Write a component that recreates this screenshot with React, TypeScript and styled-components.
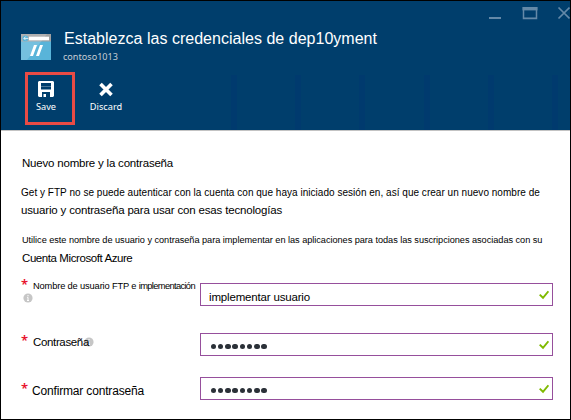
import React from 'react';
import styled, { createGlobalStyle } from 'styled-components';

const GlobalStyle = createGlobalStyle`
  * { box-sizing: border-box; }
  body { margin: 0; background: #fff; overflow: hidden; }
`;

const Blade = styled.main`
  width: 571px;
  height: 420px;
  border: 1px solid #000;
  background: #fff;
  color: #000;
  font-family: "Liberation Sans", Arial, sans-serif;
  overflow: hidden;
`;

const Header = styled.header`
  display: flex;
  flex-direction: column;
  height: 130px;
  border-bottom: 1px solid #c3c3c3;
  background: #003e6c;
  color: #fff;
`;

const WindowControls = styled.div`
  display: flex;
  justify-content: flex-end;
  height: 26px;
  padding-top: 5px;
`;

const TitleBar = styled.div`
  display: flex;
  height: 45px;
  padding: 7px 0 0 20px;
`;

const Titles = styled.div`
  display: flex;
  flex-direction: column;
  margin: -5px 0 0 12px;
`;

const Title = styled.h1`
  margin: 0 0 0 1px;
  font-size: 16px;
  font-weight: 400;
  line-height: 20px;
  letter-spacing: 0.02px;
  white-space: nowrap;
`;

const Subtitle = styled.span`
  margin-top: 2px;
  color: #c6cdd4;
  font: 9.1px/12px "Noto Sans", sans-serif;
`;

const Toolbar = styled.nav`
  display: flex;
  height: 58px;
  padding-left: 24px;
  background: repeating-linear-gradient(
    90deg, #003a6e 0 6px, transparent 6px 64.2px
  ) 230px 3px / 327px 55px no-repeat;
`;

const Command = styled.button<{ $highlighted?: boolean }>`
  display: flex;
  flex-direction: column;
  align-items: center;
  width: 50px;
  height: 53px;
  margin-right: 6px;
  padding: ${p => (p.$highlighted ? '6px 8px 0 0' : '9px 0 0')};
  border: ${p => (p.$highlighted ? '3px solid #e94b45' : '0')};
  background: transparent;
  color: #fff;
  font: 9.2px/12px "Noto Sans", sans-serif;
  svg { display: block; margin-bottom: 4px; flex: none; }
`;

const Content = styled.section`
  padding: 24px 0 0 20px;
`;

const Line = styled.p<{ $size: number; $height: number; $tracking: number; $indent?: number; $gap?: number }>`
  margin: 0 0 ${p => p.$gap ?? 0}px ${p => p.$indent ?? 0}px;
  font-size: ${p => p.$size}px;
  line-height: ${p => p.$height}px;
  letter-spacing: ${p => p.$tracking}px;
  white-space: nowrap;
`;

const Field = styled.div<{ $gap: number }>`
  display: grid;
  grid-template-columns: 12px 167px 353px;
  height: 23px;
  margin-bottom: ${p => p.$gap}px;
`;

const Required = styled.span<{ $top: number }>`
  margin-top: ${p => p.$top}px;
  color: #e8112d;
  font: 600 13px/16px "Noto Sans", sans-serif;
`;

const Label = styled.label<{ $size: number; $tracking: number; $top: number; $shift?: number }>`
  display: flex;
  align-items: center;
  isolation: isolate;
  height: 16px;
  margin: ${p => p.$top}px 0 0 ${p => p.$shift ?? 0}px;
  font-size: ${p => p.$size}px;
  line-height: 16px;
  letter-spacing: ${p => p.$tracking}px;
  white-space: pre;
`;

const LabelStack = styled.div`
  display: flex;
  flex-direction: column;
  align-items: flex-start;
`;

const Condensed = styled.span`
  letter-spacing: -0.64px;
`;

const InfoDot = styled.svg<{ $below?: boolean }>`
  display: block;
  flex: none;
  position: relative;
  z-index: -1;
  width: 10px;
  height: 10px;
  margin: ${p => (p.$below ? '0 0 0 -10px' : '0 0 0 -5px')};
`;

const InfoRow = styled.div`
  isolation: isolate;
  margin-top: -1px;
`;

const InputBox = styled.div`
  display: flex;
  align-items: center;
  justify-content: space-between;
  height: 23px;
  padding: 0 3px 0 8px;
  border: 1px solid #964f9c;
  font-size: 11.5px;
  letter-spacing: -0.17px;
  line-height: 14px;
`;

const Value = styled.span`
  padding-top: 4px;
`;

const Dots = styled.span`
  display: flex;
  gap: 1.75px;
  padding: 4px 0 0 1.5px;
`;

const Dot = styled.i`
  width: 5.5px;
  height: 5.5px;
  border-radius: 50%;
  background: #2b3138;
`;

const Info = ({ below }: { below?: boolean }) => (
  <InfoDot $below={below} viewBox="0 0 10 10">
    <circle cx="5" cy="5" r="4.6" fill="#c6c6c6" />
    <path d="M5 2v1.3M4.2 4.4H5V7.4M4 7.5h2" stroke="#fff" strokeWidth="1" fill="none" />
  </InfoDot>
);

const Check = () => (
  <svg width="10" height="10" viewBox="0 0 10 10">
    <path d="M.7 4.6 4 7.8 9.4 1.3" fill="none" stroke="#7fba00" strokeWidth="1.9" />
  </svg>
);

const Password = () => (
  <InputBox>
    <Dots>{Array.from({ length: 8 }, (_, i) => <Dot key={i} />)}</Dots>
    <Check />
  </InputBox>
);

export default function App() {
  return (
    <>
      <GlobalStyle />
      <Blade>
        <Header>
          <WindowControls>
            <svg width="82" height="14" viewBox="0 0 82 14" fill="none" stroke="#6489a8">
              <path d="M1 12h12" strokeWidth="2" />
              <path d="M35.5 1v11.5h13V1" strokeWidth="1.5" />
              <path d="M34.5 2.7h15" strokeWidth="3.4" />
              <path d="M35 12.3h14" strokeWidth="1.4" />
              <path d="m70.5 1.5 11 11m0-11-11 11" strokeWidth="1.7" />
            </svg>
          </WindowControls>
          <TitleBar>
            <svg width="30" height="26" viewBox="0 0 30 26">
              <path fill="#59b4d9" d="M0 7h30v19H0z" />
              <path fill="#a0a1a2" d="M0 0h30v7.5H0z" />
              <path fill="#fff" opacity=".17" d="M0 0h26L6 26H0z" />
              <path fill="#fff" d="M8 2.7h20v3.6H8z" />
              <circle cx="4.3" cy="4.4" r="2.9" fill="#59b4d9" />
              <path d="M7.4 4.4H3M4.6 2.6 2.8 4.4l1.8 1.8" stroke="#fff" strokeWidth=".8" fill="none" />
              <path fill="#fff" d="M13 11h3l-4 11H9zm6 0h3l-4 11h-3z" />
            </svg>
            <Titles>
              <Title>Establezca las credenciales de dep10yment</Title>
              <Subtitle>contoso1013</Subtitle>
            </Titles>
          </TitleBar>
          <Toolbar>
            <Command $highlighted>
              <svg width="16" height="16" viewBox="0 0 16 16">
                <path fill="#fff" fillRule="evenodd" d="M1 0h14l1 1v14l-1 1h-3v-5H4v5H1l-1-1V1zm2 2v6.5h10V2z" />
                <path fill="#fff" opacity=".3" d="M3 5h10v1H3z" />
                <path fill="#fff" d="M5.5 13h2.5v3h-2.5z" />
              </svg>
              Save
            </Command>
            <Command>
              <svg width="14" height="16" viewBox="0 0 14 16">
                <path d="m1.5 3 11 11m0-11-11 11" stroke="#fff" strokeWidth="3.6" />
              </svg>
              Discard
            </Command>
          </Toolbar>
        </Header>
        <Content>
          <Line $size={11.5} $height={16} $tracking={-0.2} $indent={1} $gap={13}>Nuevo nombre y la contraseña</Line>
          <Line $size={10} $height={17} $tracking={0.028}>Get y FTP no se puede autenticar con la cuenta con que haya iniciado sesión en, así que crear un nuevo nombre de</Line>
          <Line $size={11.5} $height={18} $tracking={-0.17} $gap={12}>usuario y contraseña para usar con esas tecnologías</Line>
          <Line $size={9.2} $height={18} $tracking={-0.041} $indent={1}>Utilice este nombre de usuario y contraseña para implementar en las aplicaciones para todas las suscripciones asociadas con su</Line>
          <Line $size={11.5} $height={18} $tracking={-0.417} $indent={1} $gap={16}>Cuenta Microsoft Azure</Line>
          <Field $gap={27}>
            <Required $top={-7}>*</Required>
            <LabelStack>
              <Label $size={9.3} $tracking={-0.15} $top={-5}>Nombre de usuario FTP e <Condensed>implementación</Condensed></Label>
              <InfoRow><Info below /></InfoRow>
            </LabelStack>
            <InputBox><Value>implementar usuario</Value><Check /></InputBox>
          </Field>
          <Field $gap={21}>
            <Required $top={-1}>*</Required>
            <Label $size={11.5} $tracking={-0.35} $top={1}>Contraseña<Info /></Label>
            <Password />
          </Field>
          <Field $gap={0}>
            <Required $top={3}>*</Required>
            <Label $size={12} $tracking={-0.17} $top={6} $shift={-1}>Confirmar contraseña</Label>
            <Password />
          </Field>
        </Content>
      </Blade>
    </>
  );
}
